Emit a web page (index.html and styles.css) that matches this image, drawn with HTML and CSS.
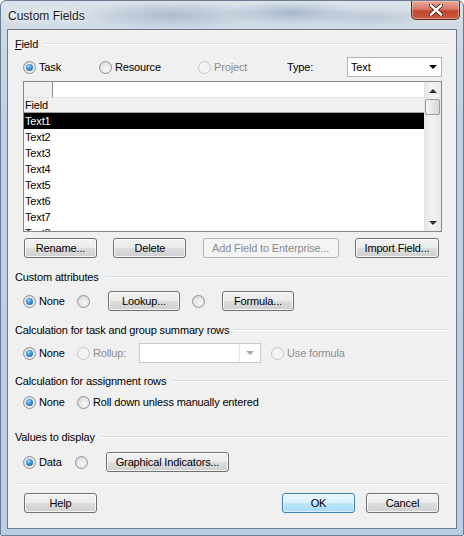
FILE: index.html
```html
<!DOCTYPE html>
<html lang="en">

    <head>

        <meta charset="UTF-8">
        <title>Custom Fields</title>

        <link rel="stylesheet" href="styles.css">

    </head>

    <body>

        <div class="window">

            <div class="titlebar">
                <span class="title">Custom Fields</span>
                <span class="close-btn">
                    <svg width="14" height="12" viewBox="0 0 14 12">
                        <path d="M2 1.5 L12 10.5 M12 1.5 L2 10.5" stroke="#4a1d16" stroke-width="4.2" stroke-linecap="square" fill="none"/>
                        <path d="M2 1.5 L12 10.5 M12 1.5 L2 10.5" stroke="#ffffff" stroke-width="2.4" stroke-linecap="square" fill="none"/>
                    </svg>
                </span>
            </div>

            <div class="client">

                <div class="group-head head-field"><span><u>F</u>ield</span></div>

                <div class="row row-scope">
                    <label class="opt opt-task"><span class="radio checked"></span>Task</label>
                    <label class="opt opt-resource"><span class="radio"></span>Resource</label>
                    <label class="opt opt-project disabled"><span class="radio"></span>Project</label>
                    <span class="type-label">Type:</span>
                    <div class="combo combo-type">
                        <span class="combo-text">Text</span>
                        <span class="combo-arrow"></span>
                    </div>
                </div>

                <div class="listbox">
                    <div class="list-main">
                        <div class="edit-row">
                            <span class="edit-cell"></span>
                            <span class="edit-input"></span>
                        </div>
                        <div class="list-header">Field</div>
                        <div class="list-item selected">Text1</div>
                        <div class="list-item">Text2</div>
                        <div class="list-item">Text3</div>
                        <div class="list-item">Text4</div>
                        <div class="list-item">Text5</div>
                        <div class="list-item">Text6</div>
                        <div class="list-item">Text7</div>
                        <div class="list-item">Text8</div>
                    </div>
                    <div class="vscroll">
                        <span class="sb-btn"><span class="arrow-up"></span></span>
                        <span class="sb-thumb"></span>
                        <span class="sb-track"></span>
                        <span class="sb-btn"><span class="arrow-down"></span></span>
                    </div>
                </div>

                <div class="row row-actions">
                    <button class="btn btn-rename">Rename...</button>
                    <button class="btn btn-delete">Delete</button>
                    <button class="btn btn-enterprise" disabled>Add Field to Enterprise...</button>
                    <button class="btn btn-import">Import Field...</button>
                </div>

                <div class="group-head head-attr"><span>Custom attributes</span></div>

                <div class="row row-attr">
                    <label class="opt opt-none"><span class="radio checked"></span>None</label>
                    <span class="radio"></span>
                    <button class="btn btn-lookup">Lookup...</button>
                    <span class="radio radio-formula"></span>
                    <button class="btn btn-formula">Formula...</button>
                </div>

                <div class="group-head head-calc"><span>Calculation for task and group summary rows</span></div>

                <div class="row row-calc">
                    <label class="opt opt-none"><span class="radio checked"></span>None</label>
                    <label class="opt opt-rollup disabled"><span class="radio"></span>Rollup:</label>
                    <div class="combo combo-rollup disabled">
                        <span class="combo-text"></span>
                        <span class="combo-arrow"></span>
                    </div>
                    <label class="opt opt-useformula disabled"><span class="radio"></span>Use formula</label>
                </div>

                <div class="group-head head-assign"><span>Calculation for assignment rows</span></div>

                <div class="row row-assign">
                    <label class="opt opt-none"><span class="radio checked"></span>None</label>
                    <label class="opt"><span class="radio"></span>Roll down unless manually entered</label>
                </div>

                <div class="group-head head-values"><span>Values to display</span></div>

                <div class="row row-values">
                    <label class="opt opt-data"><span class="radio checked"></span>Data</label>
                    <span class="radio"></span>
                    <button class="btn btn-indicators">Graphical Indicators...</button>
                </div>

                <div class="separator"></div>

                <div class="row row-footer">
                    <button class="btn btn-help">Help</button>
                    <button class="btn btn-default btn-ok">OK</button>
                    <button class="btn btn-cancel">Cancel</button>
                </div>

            </div>

        </div>

    </body>

</html>
```

FILE: styles.css
```css
body {
    margin: 0;
    padding: 0;
    background-color: #ffffff;
    font-family: "Liberation Sans", Arial, sans-serif;
    font-size: 11px;
    letter-spacing: -0.15px;
    color: #000000;
}

/* Aero frame */

.window {
    box-sizing: border-box;
    width: 464px;
    height: 536px;
    border: 1px solid #6a7c92;
    border-radius: 6px 6px 2px 2px;
    padding: 0 6px 6px 6px;
    display: flex;
    flex-direction: column;
    background:
        radial-gradient(ellipse 90px 14px at 170px 14px, rgba(120, 145, 175, 0.45), transparent),
        radial-gradient(ellipse 70px 12px at 290px 12px, rgba(110, 140, 172, 0.45), transparent),
        radial-gradient(ellipse 60px 10px at 370px 16px, rgba(140, 160, 185, 0.35), transparent),
        linear-gradient(to bottom, #dde3ea 0, #cfd9e5 28px, #bfd1e6 120px, #b9cde4 100%);
}

.titlebar {
    height: 28px;
    display: flex;
    align-items: flex-start;
    margin: 0 -3px 0 1px;
}

.title {
    margin-top: 8px;
    font-size: 12px;
    letter-spacing: 0;
    color: #1b1b1b;
    text-shadow: 0 0 6px #ffffff, 0 0 10px #ffffff;
}

.close-btn {
    margin-left: auto;
    width: 49px;
    height: 19px;
    box-sizing: border-box;
    border: 1px solid #5b2a22;
    border-top: none;
    border-radius: 0 0 5px 5px;
    background: linear-gradient(to bottom, #e9a99b 0, #d87b68 45%, #c2472f 55%, #c8593f 100%);
    box-shadow: inset 0 0 0 1px rgba(255, 220, 210, 0.45);
    display: flex;
    align-items: center;
    justify-content: center;
}

/* Dialog body */

.client {
    flex: 1;
    box-sizing: border-box;
    border: 1px solid #6c7886;
    background-color: #f0f0f0;
    padding: 0 8px 0 7px;
    display: flex;
    flex-direction: column;
}

.group-head {
    height: 14px;
    line-height: 14px;
    display: flex;
    align-items: center;
}

.group-head::after {
    content: "";
    flex: 1;
    height: 0;
    margin-left: 6px;
    border-top: 1px solid #d5dfe5;
    border-bottom: 1px solid #ffffff;
}

.head-field { margin-top: 7px; }
.head-attr { margin-top: 12px; }
.head-calc { margin-top: 12px; }
.head-assign { margin-top: 11px; }
.head-values { margin-top: 18px; }

.row {
    height: 20px;
    display: flex;
    align-items: center;
    padding-left: 8px;
}

.row-scope { margin-top: 6px; }
.row-attr { margin-top: 7px; }
.row-calc { margin-top: 6px; }
.row-assign { margin-top: 4px; }
.row-values { margin-top: 8px; }

/* Radio buttons */

.opt {
    display: flex;
    align-items: center;
    white-space: nowrap;
}

.opt .radio {
    margin-right: 3px;
}

.opt.disabled {
    color: #8d8d8d;
}

.radio {
    position: relative;
    flex: none;
    box-sizing: border-box;
    width: 13px;
    height: 13px;
    border: 1px solid #8e9196;
    border-radius: 50%;
    background: radial-gradient(circle at 60% 65%, #f8f8f8 0, #e4e4e4 55%, #cdcdcd 100%);
}

.radio.checked::after {
    content: "";
    position: absolute;
    left: 2px;
    top: 2px;
    width: 7px;
    height: 7px;
    border-radius: 50%;
    background: radial-gradient(circle at 40% 35%, #9fd8fb 0, #3a8fd0 45%, #1b5a92 100%);
}

.disabled .radio {
    border-color: #c4c6c8;
    background: #f4f4f4;
}

.opt-task { width: 76px; }
.opt-resource { width: 99px; }
.opt-project { width: 89px; }
.opt-none { width: 54px; }
.opt-data { width: 52px; }
.opt-rollup { width: 62px; }
.opt-useformula { margin-left: 10px; }

.type-label {
    width: 60px;
}

/* Combo boxes */

.combo {
    box-sizing: border-box;
    height: 20px;
    border: 1px solid #b2b5b9;
    background-color: #ffffff;
    display: flex;
    align-items: center;
}

.combo-text {
    flex: 1;
    padding-left: 3px;
}

.combo-arrow {
    width: 0;
    height: 0;
    margin-right: 4px;
    border-left: 4px solid transparent;
    border-right: 4px solid transparent;
    border-top: 4px solid #000000;
}

.combo-type {
    width: 95px;
}

.combo-rollup {
    width: 122px;
    border-color: #c8cbce;
}

.combo-rollup .combo-text {
    align-self: stretch;
    border-right: 1px solid #e6e6e6;
}

.combo-rollup .combo-arrow {
    margin: 0 6px;
    border-top-color: #a8a8a8;
}

/* Field list */

.listbox {
    box-sizing: border-box;
    width: 419px;
    height: 151px;
    margin: 4px 0 0 8px;
    border: 1px solid #828790;
    background-color: #ffffff;
    display: flex;
    overflow: hidden;
}

.list-main {
    flex: 1;
    overflow: hidden;
}

.edit-row {
    height: 15px;
    display: flex;
}

.edit-cell {
    width: 28px;
    background-color: #f0f0f0;
    border-right: 1px solid #8a8a8a;
}

.edit-input {
    flex: 1;
}

.list-header {
    box-sizing: border-box;
    height: 16px;
    line-height: 15px;
    padding-left: 1px;
    background-color: #f0f0f0;
    border-top: 1px solid #e2e2e2;
    border-bottom: 1px solid #a0a0a0;
}

.list-item {
    height: 16px;
    line-height: 16px;
    padding-left: 1px;
}

.list-item.selected {
    background-color: #000000;
    color: #ffffff;
}

.vscroll {
    width: 17px;
    display: flex;
    flex-direction: column;
    background: linear-gradient(to right, #e3e3e3, #f2f2f2 40%, #f2f2f2 60%, #e8e8e8);
}

.sb-btn {
    height: 17px;
    flex: none;
    display: flex;
    align-items: center;
    justify-content: center;
}

.arrow-up {
    width: 0;
    height: 0;
    border-left: 4px solid transparent;
    border-right: 4px solid transparent;
    border-bottom: 4px solid #303030;
}

.arrow-down {
    width: 0;
    height: 0;
    border-left: 4px solid transparent;
    border-right: 4px solid transparent;
    border-top: 4px solid #303030;
}

.sb-thumb {
    flex: none;
    height: 16px;
    margin: 0 1px;
    box-sizing: border-box;
    border: 1px solid #9b9b9b;
    border-radius: 2px;
    background: linear-gradient(to right, #f4f4f4, #e6e6e6 50%, #d6d6d6);
}

.sb-track {
    flex: 1;
}

/* Push buttons */

.btn {
    box-sizing: border-box;
    height: 20px;
    padding: 0;
    font-family: inherit;
    font-size: 11px;
    letter-spacing: inherit;
    color: #000000;
    border: 1px solid #707070;
    border-radius: 3px;
    background: linear-gradient(to bottom, #f2f2f2 0, #ebebeb 50%, #dddddd 51%, #cfcfcf 100%);
    box-shadow: inset 0 0 0 1px rgba(255, 255, 255, 0.8);
}

.btn:disabled {
    color: #8b8b8b;
    border-color: #adb2b5;
    background: #f4f4f4;
    box-shadow: none;
}

.btn-default {
    border-color: #3c7fb1;
    background: linear-gradient(to bottom, #eaf6fd 0, #d9f0fc 50%, #bee6fd 51%, #a7d9f5 100%);
    box-shadow: inset 0 0 0 1px rgba(255, 255, 255, 0.6);
}

.row-actions {
    margin-top: 6px;
    padding-left: 9px;
    padding-right: 9px;
    justify-content: space-between;
}

.btn-rename { width: 73px; }
.btn-delete { width: 73px; }
.btn-enterprise { width: 136px; }
.btn-import { width: 84px; }

.btn-lookup {
    width: 72px;
    margin-left: 18px;
}

.radio-formula {
    margin-left: 12px;
}

.btn-formula {
    width: 72px;
    margin-left: 17px;
}

.btn-indicators {
    width: 123px;
    margin-left: 18px;
}

.separator {
    margin-top: 11px;
    border-top: 1px solid #d5dfe5;
    border-bottom: 1px solid #ffffff;
}

.row-footer {
    margin-top: 8px;
    padding-left: 9px;
}

.btn-help { width: 73px; }

.btn-ok {
    width: 73px;
    margin-left: auto;
}

.btn-cancel {
    width: 73px;
    margin-left: 11px;
    margin-right: 9px;
}
```
